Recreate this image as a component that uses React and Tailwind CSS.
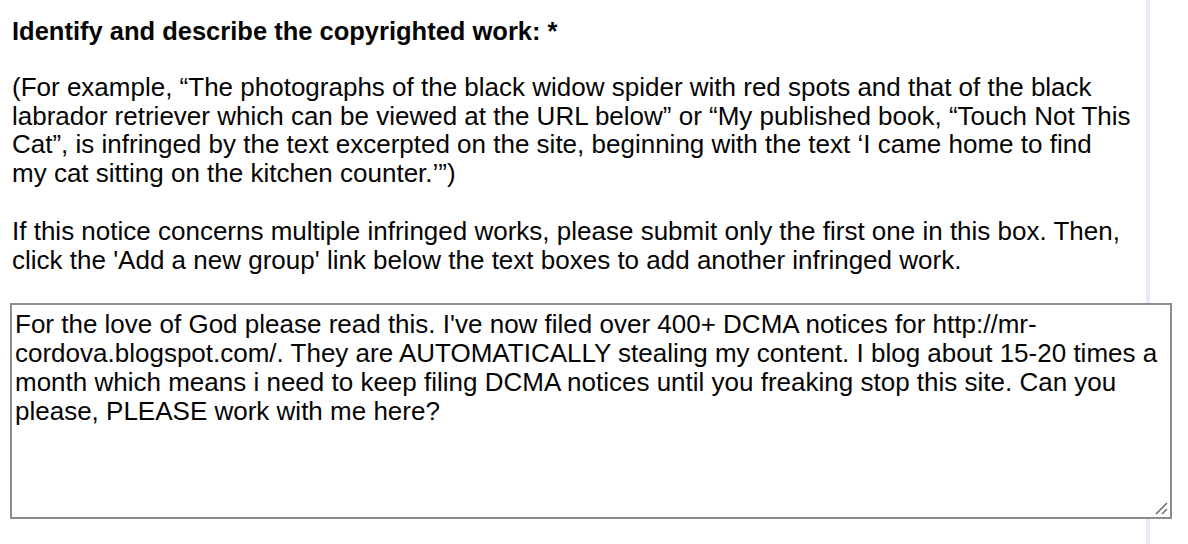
import React from 'react';

const para1 = [
  '(For example, \u201CThe photographs of the black widow spider with red spots and that of the black',
  'labrador retriever which can be viewed at the URL below\u201D or \u201CMy published book, \u201CTouch Not This',
  'Cat\u201D, is infringed by the text excerpted on the site, beginning with the text \u2018I came home to find',
  'my cat sitting on the kitchen counter.\u2019\u201D)',
];

const para2 = [
  "If this notice concerns multiple infringed works, please submit only the first one in this box. Then,",
  "click the 'Add a new group' link below the text boxes to add another infringed work.",
];

const answer = [
  "For the love of God please read this. I've now filed over 400+ DCMA notices for http://mr-",
  'cordova.blogspot.com/. They are AUTOMATICALLY stealing my content. I blog about 15-20 times a',
  'month which means i need to keep filing DCMA notices until you freaking stop this site. Can you',
  'please, PLEASE work with me here?',
];

const Lines = ({ lines }) =>
  lines.map((line, i) => (
    <span key={i} className="block whitespace-nowrap">
      {line}
    </span>
  ));

const App = () => {
  return (
    <div className="h-[544px] w-[1188px] overflow-hidden bg-white font-['Liberation_Sans',Arial,sans-serif] text-[26px] leading-[28.75px] text-[#050505]">
      <div className="h-full w-[1150px] border-r-4 border-[#e9ebf6]">
        <div className="pt-[17px] pl-[12px]">
          <h2 className="text-[25.5px] font-bold">Identify and describe the copyrighted work: *</h2>
          <p className="mt-[27px]">
            <Lines lines={para1} />
          </p>
          <p className="mt-[29px]">
            <Lines lines={para2} />
          </p>
        </div>

        {/* Textarea */}
        <div className="relative mt-[29px] ml-[10px] h-[216px] w-[1162px] border-2 border-[#8c8c8c] bg-white px-[3px] pt-[5px]">
          <Lines lines={answer} />
          <svg
            className="absolute right-[2px] bottom-[2px]"
            width="14"
            height="14"
            viewBox="0 0 14 14"
          >
            <line x1="2" y1="13" x2="13" y2="2" stroke="#6b6b6b" strokeWidth="1.5" />
            <line x1="8" y1="13" x2="13" y2="8" stroke="#6b6b6b" strokeWidth="1.5" />
          </svg>
        </div>
      </div>
    </div>
  );
};

export default App;
